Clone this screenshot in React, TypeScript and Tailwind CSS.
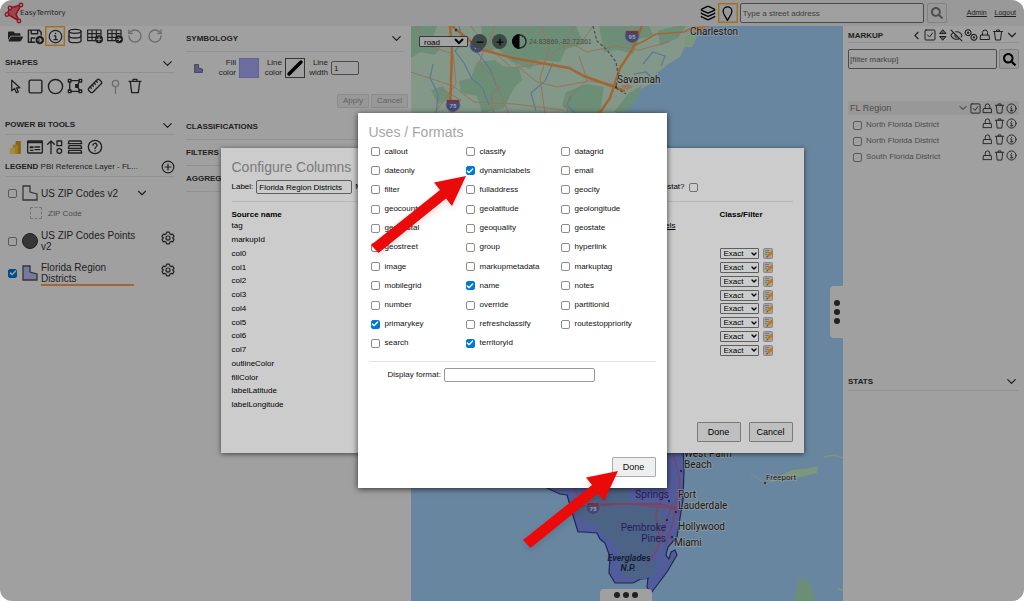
import { useState, type ReactNode } from "react";
import {
  Check,
  ChevronDown,
  ChevronLeft,
  Circle,
  Database,
  EyeOff,
  Layers,
  Minus,
  Plus,
  RotateCcw,
  RotateCw,
  Ruler,
  Square,
} from "lucide-react";
import { FaFolderOpen, FaSearch } from "react-icons/fa";

const FORMATS = [
  "callout", "classify", "datagrid",
  "dateonly", "dynamiclabels", "email",
  "filter", "fulladdress", "geocity",
  "geocounty", "geolatitude", "geolongitude",
  "geopostal", "geoquality", "geostate",
  "geostreet", "group", "hyperlink",
  "image", "markupmetadata", "markuptag",
  "mobilegrid", "name", "notes",
  "number", "override", "partitionid",
  "primarykey", "refreshclassify", "routestoppriority",
  "search", "territoryid",
];

const COLUMNS = [
  "tag", "markupId", "col0", "col1", "col2", "col3", "col4", "col5", "col6", "col7",
  "outlineColor", "fillColor", "labelLatitude", "labelLongitude",
];

const MARKUPS = ["North Florida District", "North Florida District", "South Florida District"];

function Glyph({ size = 16, children }: { size?: number; children: ReactNode }) {
  return (
    <svg
      width={size}
      height={size}
      viewBox="0 0 24 24"
      fill="none"
      stroke="currentColor"
      strokeWidth="2"
      strokeLinecap="round"
      strokeLinejoin="round"
      aria-hidden="true"
      className="shrink-0"
    >
      {children}
    </svg>
  );
}

const InfoIcon = ({ size = 16 }: { size?: number }) => (
  <Glyph size={size}>
    <circle cx="12" cy="12" r="10" />
    <path d="M10 11h2.400v6M9.500 17h5.500" />
    <circle cx="12" cy="7.200" r="1.300" fill="currentColor" stroke="none" />
  </Glyph>
);

const TrashIcon = ({ size = 16 }: { size?: number }) => (
  <Glyph size={size}>
    <path d="M3 5h18M9 5V2h6v3M5 6l2 16h10l2-16" />
  </Glyph>
);

const LockIcon = ({ size = 16 }: { size?: number }) => (
  <Glyph size={size}>
    <path d="M4 12h16l1 9H3zM7 12V7a5 5 0 0 1 10 0v5" />
  </Glyph>
);

const CheckSquareIcon = ({ size = 16 }: { size?: number }) => (
  <Glyph size={size}>
    <rect x="2" y="2" width="20" height="20" rx="2" />
    <path d="m7 12 4 4 6-8" />
  </Glyph>
);

const GearIcon = ({ size = 16 }: { size?: number }) => (
  <Glyph size={size}>
    <path d="M9.600 2h4.800l.7 3 2 1.200 3-.9 2.300 4.100L20.200 11.500v1l2.200 2.100-2.300 4.100-3-.9-2 1.200-.7 3H9.600l-.7-3-2-1.200-3 .9-2.300-4.100 2.200-2.100v-1L1.600 9.400l2.300-4.100 3 .9 2-1.200z" />
    <circle cx="12" cy="12" r="3.500" />
  </Glyph>
);

const SaveAsIcon = () => (
  <Glyph size={17}>
    <path d="M11 20H2V3h15l3 3v4M6 3v5h9V3M6 20v-6h5" />
    <circle cx="18" cy="17" r="6" fill="currentColor" stroke="none" />
    <path d="M15 17h5M18 14.500l2.500 2.500-2.500 2.500" stroke="white" strokeWidth="1.500" />
  </Glyph>
);

const TableBadgeIcon = ({ arrow = false }: { arrow?: boolean }) => (
  <Glyph size={16}>
    <path d="M1 3h20v8M1 3v16h11M1 8.500h20M1 14h13M7.500 3v16M14 3v11" strokeWidth="1.800" />
    <circle cx="18" cy="17" r="6" fill="currentColor" stroke="none" />
    <path
      d={arrow ? "M15 17h5.500M18 14.500l2.500 2.500-2.500 2.500" : "M15 17h6M18 14v6"}
      stroke="white"
      strokeWidth="1.500"
    />
  </Glyph>
);

const CursorIcon = () => (
  <Glyph size={15}>
    <path d="M6 2v17l4.500-4 3 7 3-1.300-3-6.700H19z" />
  </Glyph>
);

const EditVerticesIcon = () => (
  <Glyph size={16}>
    <rect x="2" y="2" width="4" height="4" />
    <rect x="18" y="2" width="4" height="4" />
    <rect x="2" y="18" width="4" height="4" />
    <rect x="18" y="18" width="4" height="4" />
    <rect x="13" y="10" width="4" height="4" fill="currentColor" />
    <path d="M6 4h12M4 6v12M6 20h12M18.500 6 16 10M16 14l3 4" />
  </Glyph>
);

const PushpinIcon = () => (
  <Glyph size={15}>
    <circle cx="12" cy="7" r="5" />
    <path d="M12 12v11" />
  </Glyph>
);

const PowerBiIcon = () => (
  <svg width="14" height="15" viewBox="0 0 24 24" aria-hidden="true">
    <rect x="13" y="1" width="9" height="22" rx="1" fill="#d99a1f" />
    <rect x="8" y="7" width="9" height="16" rx="1" fill="#f2bf3a" />
    <rect x="3" y="13" width="9" height="10" rx="1" fill="#ffdc70" />
  </svg>
);

const CardIcon = () => (
  <Glyph size={16}>
    <rect x="1" y="3" width="22" height="18" rx="1" />
    <path d="M2 5h20" strokeWidth="3" />
    <path d="M5 12h4v1H5zM5 17h4M12 12h7M12 16h7" />
  </Glyph>
);

const SortShapesIcon = () => (
  <Glyph size={16}>
    <path d="M6 22V3M1 8l5-5 5 5" />
    <rect x="15" y="3" width="7" height="7" />
    <circle cx="18.500" cy="18" r="3.500" />
  </Glyph>
);

const RowsIcon = () => (
  <Glyph size={16}>
    <path d="M3 3h18l1 4H2zM3 10h18l1 4H2zM3 17h18l1 4H2z" />
  </Glyph>
);

const HelpIcon = () => (
  <Glyph size={16}>
    <circle cx="12" cy="12" r="10" />
    <path d="M9 9.500a3 3 0 1 1 4.500 2.500c-1 .6-1.500 1-1.500 2.200M12 17.500v.2" />
  </Glyph>
);

function RegionShape({ size, fill }: { size: number; fill: string }) {
  return (
    <svg width={size} height={size} viewBox="0 0 16 16" aria-hidden="true" className="shrink-0">
      <path d="M1 1h7v6l7 2v6H1z" fill={fill} stroke="#555" strokeWidth="1.300" />
    </svg>
  );
}

function Logo() {
  return (
    <a href="#home" className="flex items-center">
      <svg width="20" height="22" viewBox="0 0 20 22" aria-hidden="true">
        <path d="M17 3 6 6 3 12l12 7-3-7 3-5z" fill="#f07078" stroke="#e01f2b" strokeWidth="1.500" />
        <g fill="#f4c5c5" stroke="#e01f2b" strokeWidth="1.300">
          <circle cx="17" cy="3" r="1.800" />
          <circle cx="6" cy="6" r="1.800" />
          <circle cx="3" cy="12.500" r="1.800" />
          <circle cx="15" cy="19" r="1.800" />
        </g>
      </svg>
      <span className="-ml-1 font-['DejaVu_Sans',sans-serif] text-[7px] text-[#333]">EasyTerritory</span>
    </a>
  );
}

function Checkbox({ id, label, checked = false }: { id: string; label?: string; checked?: boolean }) {
  const [on, setOn] = useState(checked);
  return (
    <span className="grid size-[9px] shrink-0 place-items-center">
      <input
        id={id}
        type="checkbox"
        aria-label={label}
        checked={on}
        onChange={(e) => setOn(e.target.checked)}
        className="col-start-1 row-start-1 size-[9px] appearance-none rounded-[2px] border border-[#8c8c8c] bg-white/40 checked:border-[#0078d7] checked:bg-[#0078d7]"
      />
      {on && <Check size={8} strokeWidth={4} className="pointer-events-none col-start-1 row-start-1 text-white" />}
    </span>
  );
}

function Tool({ label, active = false, muted = false, children }: {
  label: string;
  active?: boolean;
  muted?: boolean;
  children: ReactNode;
}) {
  return (
    <button
      aria-label={label}
      className={`flex size-5 shrink-0 items-center justify-center ${active ? "border border-[#ffb02a] outline outline-[#ffb02a]/40 -outline-offset-2" : ""} ${muted ? "text-[#aaa]" : "text-[#333]"}`}
    >
      {children}
    </button>
  );
}

function Heading({ title, collapsible = true, className = "" }: {
  title: string;
  collapsible?: boolean;
  className?: string;
}) {
  return (
    <div className={`flex items-center justify-between border-b border-[#e4e4e4] ${className}`}>
      <h2 className="font-bold">{title}</h2>
      {collapsible && <ChevronDown size={15} strokeWidth={2} className="text-[#333]" />}
    </div>
  );
}

function TopBar() {
  return (
    <header className="flex h-[26px] items-center justify-between bg-[#f0f0f0] pr-2 pl-1">
      <Logo />
      <div className="flex items-center">
        <Tool label="Layers"><Layers size={16} className="text-black" /></Tool>
        <Tool label="Place pushpin" active>
          <Glyph size={15}>
            <path stroke="black" d="M12 23C9 17 5 13.500 5 8.500a7 7 0 0 1 14 0C19 13.500 15 17 12 23z" />
          </Glyph>
        </Tool>
        <input
          aria-label="Street address"
          placeholder="Type a street address"
          className="ml-0.5 h-5 w-[184px] rounded-[2px] border border-[#767676] bg-white/60 px-0.5 placeholder:text-[#666]"
        />
        <button aria-label="Search" className="ml-[3px] flex size-5 items-center justify-center rounded-[2px] border border-[#ccc] bg-[#efefef] text-[#777]">
          <FaSearch size={12} />
        </button>
        <nav className="ml-5 flex gap-2 text-[7px] underline">
          <a href="#admin">Admin</a>
          <a href="#logout">Logout</a>
        </nav>
      </div>
    </header>
  );
}

function Sidebar() {
  return (
    <aside className="w-[180px] shrink-0 bg-[#fbfbfb] px-[5px]">
      <div className="flex">
        <Tool label="Open"><FaFolderOpen size={15} /></Tool>
        <Tool label="Save as"><SaveAsIcon /></Tool>
        <Tool label="Info" active><InfoIcon size={15} /></Tool>
        <Tool label="Data"><Database size={16} /></Tool>
        <Tool label="Add table"><TableBadgeIcon /></Tool>
        <Tool label="Export table"><TableBadgeIcon arrow /></Tool>
        <Tool label="Undo" muted><RotateCcw size={16} /></Tool>
        <Tool label="Redo" muted><RotateCw size={16} /></Tool>
      </div>

      <Heading title="SHAPES" className="mt-2 h-[19px]" />
      <div className="mt-[3px] flex">
        <Tool label="Select"><CursorIcon /></Tool>
        <Tool label="Rectangle"><Square size={17} /></Tool>
        <Tool label="Circle"><Circle size={17} /></Tool>
        <Tool label="Edit"><EditVerticesIcon /></Tool>
        <Tool label="Measure"><Ruler size={16} className="-scale-x-100" /></Tool>
        <Tool label="Pushpin" muted><PushpinIcon /></Tool>
        <Tool label="Delete"><TrashIcon size={16} /></Tool>
      </div>

      <Heading title="POWER BI TOOLS" className="mt-5 h-[19px]" />
      <div className="mt-[2px] flex">
        <Tool label="Power BI"><PowerBiIcon /></Tool>
        <Tool label="Card"><CardIcon /></Tool>
        <Tool label="Sort"><SortShapesIcon /></Tool>
        <Tool label="Rows"><RowsIcon /></Tool>
        <Tool label="Help"><HelpIcon /></Tool>
      </div>

      <div className="mt-px flex h-[19px] items-center justify-between border-b border-[#e4e4e4]">
        <p className="whitespace-nowrap">
          <b>LEGEND</b> PBI Reference Layer - FL...
        </p>
        <button aria-label="Add layer">
          <Glyph size={14}>
            <circle cx="12" cy="12" r="10" />
            <path d="M12 7v10M7 12h10" />
          </Glyph>
        </button>
      </div>

      <ul className="mt-2 text-[10px] leading-[11px]">
        <li className="flex h-4 items-center pl-[3px]">
          <Checkbox id="zip" />
          <span className="ml-[5px]"><RegionShape size={16} fill="none" /></span>
          <label htmlFor="zip" className="ml-[3px] w-[94px]">US ZIP Codes v2</label>
          <ChevronDown size={14} className="text-[#333]" />
        </li>
        <li className="mt-1 flex h-4 items-center gap-1.5 pl-[25px] text-[8px] text-[#777]">
          <span className="size-3 border border-dashed border-[#bbb]" />
          ZIP Code
        </li>
        <li className="mt-2 flex h-6 items-center pl-[3px]">
          <Checkbox id="points" />
          <span className="ml-[5px] size-4 rounded-full border border-[#333] bg-[#555]" />
          <label htmlFor="points" className="ml-[3px] w-[96px]">US ZIP Codes Points v2</label>
          <span className="mb-1.5 ml-auto"><GearIcon size={14} /></span>
        </li>
        <li className="mt-2 flex h-6 items-center pl-[3px]">
          <Checkbox id="florida" checked />
          <span className="ml-[5px]"><RegionShape size={16} fill="#bcbcff" /></span>
          <label htmlFor="florida" className="ml-[3px] w-[93px] border-b-2 border-[#ffa04d] pt-0.5">
            Florida Region<br />Districts
          </label>
          <span className="mb-1.5 ml-auto"><GearIcon size={14} /></span>
        </li>
      </ul>
    </aside>
  );
}

function StylePanel() {
  return (
    <section className="w-[231px] shrink-0 bg-[#fbfbfb] pr-[7px] pl-1.5">
      <Heading title="SYMBOLOGY" className="h-[26px]" />
      <div className="mt-1.5 flex items-center pl-2 leading-[10px]">
        <RegionShape size={9} fill="#8f8fe0" />
        <label htmlFor="fill" className="ml-3 w-[21px] text-right">Fill color</label>
        <button id="fill" aria-label="Fill color" className="ml-[3px] size-5 border border-[#9c9ce6] bg-[#a9a9fb]" />
        <label htmlFor="line" className="ml-0.5 w-[21px] text-right">Line color</label>
        <button id="line" aria-label="Line color" className="ml-[3px] size-5 border border-[#555]">
          <svg viewBox="0 0 18 18" aria-hidden="true">
            <path d="M3 15 15 3" stroke="black" strokeWidth="3.500" strokeLinecap="round" />
          </svg>
        </button>
        <label htmlFor="width" className="ml-0.5 w-[21px] text-right">Line width</label>
        <input id="width" defaultValue="1" className="ml-[3px] h-3.5 w-7 rounded-[2px] border border-[#767676] px-0.5" />
      </div>
      <div className="-mr-1 mt-4 flex justify-end gap-0.5 text-[#999]">
        <button className="h-3.5 w-8 rounded-[1px] border border-[#ddd] bg-[#efefef]">Apply</button>
        <button className="h-3.5 w-[37px] rounded-[1px] border border-[#ddd] bg-[#efefef]">Cancel</button>
      </div>
      <Heading title="CLASSIFICATIONS" collapsible={false} className="mt-1.5 h-[26px]" />
      <Heading title="FILTERS" collapsible={false} className="h-[26px]" />
      <Heading title="AGGREGATIONS" collapsible={false} className="h-[26px]" />
    </section>
  );
}

function Shield({ x, y, n }: { x: number; y: number; n: string }) {
  return (
    <g>
      <path
        d={`M${x - 6} ${y - 5}h12l1 5q0 5-7 7-7-2-7-7z`}
        fill="#6773bd"
        stroke="#aab"
        strokeWidth="0.600"
      />
      <path d={`M${x - 6} ${y - 5}h12v2h-12z`} fill="#d84452" />
      <text x={x} y={y + 3} textAnchor="middle" fontSize="6" fontWeight="bold" fill="white">{n}</text>
    </g>
  );
}

const FLORIDA =
  "M110 420V452L136 462 149 468 156 469 161 486 167 506 172 506 186 507 189 513 194 517 199 531 198 547 204 557 222 557 230 553 237 552 236 561 240 567 247 558 256 546 266 529 264 524 260 526 258 533 255 529 257 521 266 511 269 492 272 474 273 444 272 420z";

function MapCanvas() {
  return (
    <svg
      viewBox="0 0 432 575"
      preserveAspectRatio="xMidYMid slice"
      className="absolute inset-0 size-full font-[Roboto,sans-serif]"
      role="img"
      aria-label="Map"
    >
      <rect width="432" height="575" fill="#a5d2fa" />
      <path d="M0 0H284L281 12 273 22 269 31 256 39 246 47 240 58 223 66 221 76 210 87 200 110H0z" fill="#cdeed7" />
      <g fill="#acdfb9">
        <path d="M0 0h26l-4 12 8 9-6 8-14-3-10 6z" />
        <path d="M70 0h95l8 18-18 5-6 13-22-2-8 9-18-7-14-13-14 2z" />
        <path d="M188 0h50l5 10-15 3-6 15-15-4-14 2z" />
        <path d="M66 36l18-2 8 6 16 2 3 12-8 8-10 20-22 5-5-17-16-3-2-12 12-3z" />
        <path d="M155 66l20-8 18 3-4 27h-28l-10-8z" />
        <path d="M217 68l14-9-6 16-14 14-8-3z" />
        <path d="M20 64l12-4 9 12-14 6z" />
        <path d="M247 5l18-5h10l-8 12-18 8z" />
      </g>
      <g fill="none" stroke="#8fbcf0" strokeWidth="1.200">
        <path d="M48 0l4 16-8 9 9 12 8 16 10 8 7 18M66 26l13 17 6 16M125 85l-5-18 14-12 8-18M22 38l-3 14 8 16-2 20" />
        <path d="M232 38l10-12 12 4-4 10M223 48l12-2 8 8M164 87l-8-8 5-10" />
      </g>
      <g fill="none" stroke="#e9b795" strokeWidth="1">
        <path d="M0 46l42 14 21 16 40 2 50 6M4 0l15 20 23 8 3 30-22 30M60 0l14 20-6 18 14 12 16 38" />
        <path d="M84 0l-8 20 25 22 30-4 17-16 22-5 12-17M104 38l22 18 20 5 32-6 28 4M130 0l8 22-9 30 5 35" />
        <path d="M164 0l-10 14 22 12 28-6 24 4 30-8M168 30l8 24-18 18-2 16M28 62l22 12-10 14M90 60l-10 8 3 20" />
      </g>
      <g fill="none" stroke="#ff9f51" strokeWidth="2.500">
        <path d="M39 0l2 24-2 62" />
        <path d="M41 0l28 23 33 9 34 6 22 4 15 8 22 8 19 7" />
        <path d="M231 0l-10 24-12 18-10 30-11 16" />
        <path d="M221 21l12-6 12-7 28-2 10-5" strokeWidth="1.500" />
      </g>
      <path d="M182 0l4 15 10 9 9 12 2 12-2 14 10 6" fill="none" stroke="#777" strokeDasharray="3 2" strokeWidth="1.200" />
      <circle cx="45" cy="4" r="1.500" fill="#333" stroke="#ddd" strokeWidth="0.500" />
      <circle cx="205" cy="61" r="1" fill="#333" />
      <path d="M209 60l8-2 5 3-6 3z" fill="#f2bd98" />
      <path d="M282 0h14l-6 6-7 2z" fill="#ffae72" />
      <path d="M275 10l7-4 4 5-5 10h-8z" fill="#c6ebc4" />
      <Shield x={66} y={20} n="16" />
      <Shield x={221} y={10} n="95" />
      <Shield x={42} y={79} n="75" />

      <path d={FLORIDA} fill="#8090f3" stroke="#333d83" strokeWidth="1.200" />
      <path
        d="M165 475l18-13h33l4 16 30 5 5 15-4 18-9 16 4 12-12 10-22-4-5-28-20-20-22-12z"
        fill="#779bd3"
      />
      <g fill="none" stroke="#b873ab" strokeWidth="1.600">
        <path d="M163 462l8 18 47-2 40 4 12 2M262 427l7 28-7 42-8 22M254 462l-9 26 4 26M268 450v40M262 476l-16 48-10 14" />
      </g>
      <path d="M171 480l33-2h45l15 4" stroke="#bf6b92" strokeWidth="2" fill="none" />
      <Shield x={182} y={482} n="75" />
      <g fill="#413985">
        <circle cx="270" cy="445" r="1.200" />
        <circle cx="258" cy="475" r="1.200" />
        <circle cx="265" cy="486" r="1.200" />
        <circle cx="256" cy="494" r="1.200" />
        <circle cx="261" cy="511" r="1.200" />
      </g>

      <path d="M355 458l14-8 12-6 14-1 12-3-1 7-16 4-14 1-15 4z" fill="#c6ebc4" />
      <path d="M340 448l12 8 4 3" stroke="#ddd" fill="none" />
      <circle cx="354" cy="457" r="1" fill="#333" />
      <path d="M386 552l12 2 3 10 4 11h-22l4-14z" fill="#acdfb9" />
      <path d="M413 431l10-2 9 3M427 562l5 3" stroke="#c6ebc4" strokeWidth="1.500" fill="none" />

      <g fontSize="10" fill="#2b2b2b" stroke="white" strokeWidth="2" strokeOpacity="0.500" paintOrder="stroke">
        <text x="206" y="57">Savannah</text>
        <text x="279" y="9">Charleston</text>
        <text x="273" y="431">West Palm</text>
        <text x="273" y="442">Beach</text>
        <text x="267" y="472">Fort</text>
        <text x="267" y="483">Lauderdale</text>
        <text x="267" y="504">Hollywood</text>
        <text x="263" y="520">Miami</text>
        <text x="355" y="454" fontSize="8">Freeport</text>
      </g>
      <g fontSize="10" fill="#3c2f91">
        <text x="258" y="472" textAnchor="end">Springs</text>
        <text x="255" y="505" textAnchor="end">Pembroke</text>
        <text x="255" y="516" textAnchor="end">Pines</text>
      </g>
      <g fontSize="9" fill="#26345e" fontStyle="italic" fontWeight="bold" textAnchor="middle">
        <text x="218" y="535">Everglades</text>
        <text x="217" y="545">N.P.</text>
      </g>
    </svg>
  );
}

function MapView() {
  return (
    <main className="relative min-w-0 flex-1 overflow-hidden">
      <MapCanvas />
      <div className="relative flex items-center pt-2 pl-2">
        <select aria-label="Map style" className="h-[11px] w-[49px] rounded-[1px] border border-[#555] bg-white text-black">
          <option>road</option>
        </select>
        <button aria-label="Zoom out" className="ml-1 flex size-[15px] items-center justify-center rounded-full bg-[#60736b] text-black">
          <Minus size={10} strokeWidth={3} />
        </button>
        <button aria-label="Zoom in" className="ml-[5px] flex size-[15px] items-center justify-center rounded-full bg-[#60736b] text-black">
          <Plus size={10} strokeWidth={3} />
        </button>
        <button aria-label="Contrast" className="ml-[5px]">
          <svg width="15" height="15" viewBox="0 0 15 15" aria-hidden="true">
            <circle cx="7.500" cy="7.500" r="6.500" fill="none" stroke="#444" strokeWidth="1.500" />
            <path d="M7.500 0a7.500 7.500 0 0 0 0 15z" />
          </svg>
        </button>
        <span className="ml-0.5 text-[7px] text-[#777]">24.83869,-82.72361</span>
      </div>
      <button aria-label="Toggle side panel" className="absolute top-[260px] right-0 flex h-[52px] w-[13px] flex-col items-center justify-center gap-[3px] rounded-l bg-[#fbfbfb]">
        <Dots />
      </button>
      <button aria-label="Toggle grid" className="absolute bottom-0 left-1/2 ml-[-27px] flex h-3 w-[52px] items-center justify-center gap-[3px] rounded-t bg-[#fbfbfb]">
        <Dots />
      </button>
    </main>
  );
}

function Dots() {
  return (
    <>
      <i className="size-1.5 rounded-full bg-[#333]" />
      <i className="size-1.5 rounded-full bg-[#333]" />
      <i className="size-1.5 rounded-full bg-[#333]" />
    </>
  );
}

function MarkupPanel() {
  return (
    <aside className="w-[181px] shrink-0 bg-[#fbfbfb] px-[5px]">
      <div className="flex h-[17px] items-end justify-between border-b border-[#e4e4e4]">
        <h2 className="pb-px font-bold">MARKUP</h2>
        <div className="flex items-center gap-px">
          <ChevronLeft size={13} />
          <CheckSquareIcon size={12} />
          <Glyph size={12}>
            <path d="M12 2l6 7H6zM12 22l6-7H6z" fill="currentColor" fillOpacity="0.500" />
          </Glyph>
          <EyeOff size={13} />
          <Glyph size={14}>
            <circle cx="7" cy="8" r="5" strokeDasharray="3 1.500" />
            <circle cx="7" cy="8" r="1" />
            <circle cx="17" cy="16" r="5" strokeDasharray="3 1.500" />
            <circle cx="17" cy="16" r="1" />
          </Glyph>
          <LockIcon size={12} />
          <TrashIcon size={12} />
          <ChevronDown size={14} />
        </div>
      </div>
      <div className="mt-1.5 flex gap-0.5">
        <input
          aria-label="Filter markup"
          placeholder="[filter markup]"
          className="h-5 min-w-0 flex-1 rounded-[2px] border border-[#767676] px-px placeholder:text-[#666]"
        />
        <button aria-label="Search markup" className="flex size-5 items-center justify-center rounded-[2px] border border-[#ccc] bg-[#efefef] text-black">
          <FaSearch size={13} />
        </button>
      </div>

      <div className="mt-8 flex h-3.5 items-center justify-between bg-[#efefef] pr-0.5 pl-0.5 text-[#777]">
        <span className="text-[9px]">FL Region</span>
        <span className="flex items-center gap-px text-[#333]">
          <ChevronDown size={12} />
          <CheckSquareIcon size={11} />
          <LockIcon size={11} />
          <TrashIcon size={11} />
          <InfoIcon size={11} />
        </span>
      </div>
      <ul className="mt-0.5">
        {MARKUPS.map((name, i) => (
          <li key={i} className="flex h-4 items-center pr-0.5 pl-[5px] text-[#777]">
            <Checkbox id={`markup-${i}`} />
            <label htmlFor={`markup-${i}`} className="ml-1 flex-1">{name}</label>
            <span className="mb-1 flex gap-px text-[#333]">
              <LockIcon size={11} />
              <TrashIcon size={11} />
              <InfoIcon size={11} />
            </span>
          </li>
        ))}
      </ul>
      <Heading title="STATS" className="mt-52 h-[18px]" />
    </aside>
  );
}

function ConfigureDialog() {
  return (
    <section role="dialog" aria-label="Configure Columns" className="flex min-h-[305px] w-[583px] flex-col bg-white px-[11px] pt-2.5 pb-[11px] text-black shadow-[0_1px_5px_rgba(0,0,0,0.6)]">
      <h1 className="text-[14px] leading-[18px] text-[#999]">Configure Columns</h1>
      <div className="mt-px flex h-5 items-center">
        <label htmlFor="label">Label:</label>
        <input id="label" defaultValue="Florida Region Districts" className="mr-[3px] ml-[3px] h-3.5 w-24 rounded-[2px] border border-[#767676] px-0.5" />
        <span>Max</span>
        <label htmlFor="stat" className="ml-auto">Thermostat?</label>
        <span className="mr-[95px] ml-1 flex"><Checkbox id="stat" /></span>
      </div>
      <table className="mt-1 h-[211px] w-full border-t border-[#e4e4e4] text-left">
        <thead>
          <tr className="h-[18px] align-bottom">
            <th>Source name</th>
            <th>Uses</th>
            <th className="w-[73px]">Class/Filter</th>
          </tr>
        </thead>
        <tbody>
          {COLUMNS.map((name) => (
            <tr key={name} className="h-[13px]">
              <td className="p-0">{name}</td>
              <td className="p-0 pr-11 text-right">
                {name === "tag" && <a href="#labels" className="underline">Labels</a>}
              </td>
              <td className="p-0">
                {name.startsWith("col") && (
                  <span className="flex items-center gap-1">
                    <span className="grid items-center">
                      <select aria-label={`${name} class`} className="col-start-1 row-start-1 h-[11px] w-[39px] appearance-none rounded-[1px] border border-[#767676] pl-[3px] leading-[9px]">
                        <option>Exact</option>
                      </select>
                      <ChevronDown size={8} strokeWidth={4} className="pointer-events-none col-start-1 row-start-1 mr-px justify-self-end" />
                    </span>
                    <button aria-label={`Edit ${name}`}>
                      <svg width="10" height="11" viewBox="0 0 10 11" aria-hidden="true" className="block">
                        <rect x="0.500" y="0.500" width="9" height="10" rx="1" fill="#ccc" stroke="#aaa" />
                        <path d="M2 2h4v1H2zM2 4h4v1H2zM2 6h2v1H2z" fill="#999" />
                        <path d="M4 9l1-3 4-3 1 2-4 3z" fill="#f5960f" stroke="#f5960f" strokeWidth="0.600" />
                        <path d="M3.500 9.500 4 8l1 1z" fill="#333" />
                      </svg>
                    </button>
                  </span>
                )}
              </td>
            </tr>
          ))}
        </tbody>
      </table>
      <div className="mt-auto flex justify-end gap-2 text-[9px]">
        <button className="h-5 w-11 rounded-[1px] border border-[#999] bg-[#efefef]">Done</button>
        <button className="h-5 w-11 rounded-[1px] border border-[#999] bg-[#efefef]">Cancel</button>
      </div>
    </section>
  );
}

function Arrow({ className }: { className: string }) {
  return (
    <svg width="98" height="80" viewBox="0 0 98 80" aria-hidden="true" className={`pointer-events-none absolute drop-shadow-md ${className}`}>
      <path d="M96 0 64 6.500 70 14 1 69 8.500 77 76 22.500 82 30z" fill="#ea0a0a" />
    </svg>
  );
}

function FormatsDialog() {
  return (
    <section role="dialog" aria-label="Uses / Formats" className="relative flex min-h-[375px] w-[309px] flex-col bg-white px-[11px] pt-2.5 pb-[11px] text-[#111] shadow-[0_1px_6px_rgba(0,0,0,0.7)]">
      <h1 className="mb-px text-[14px] leading-[18px] text-[#a5a5a5]">Uses / Formats</h1>
      <div className="grid h-[211px] auto-rows-fr grid-cols-3 pl-0.5">
        {FORMATS.map((name) => (
          <div key={name} className="flex items-center gap-[5px]">
            <Checkbox id={name} checked={["dynamiclabels", "name", "primarykey", "territoryid"].includes(name)} />
            <label htmlFor={name}>{name}</label>
          </div>
        ))}
      </div>
      <div className="mt-2 flex items-center gap-[3px] border-t border-[#e4e4e4] pt-1.5 pl-[19px]">
        <label htmlFor="format">Display format:</label>
        <input id="format" className="h-3.5 w-[151px] rounded-[2px] border border-[#999] px-0.5" />
      </div>
      <div className="mt-auto flex justify-end text-[9px]">
        <button className="h-5 w-11 rounded-[1px] border border-[#aaa] bg-[#efefef]">Done</button>
      </div>
      <Arrow className="top-[63px] left-3" />
      <Arrow className="top-[358px] left-[164px]" />
    </section>
  );
}

export default function App() {
  return (
    <div className="relative flex min-h-screen flex-col overflow-hidden rounded-xl font-['Liberation_Sans',Arial,sans-serif] text-[8px] leading-[10px] text-[#333]">
      <TopBar />
      <div className="flex flex-1">
        <Sidebar />
        <StylePanel />
        <MapView />
        <MarkupPanel />
      </div>
      <div className="absolute inset-0 flex items-center justify-center bg-black/20">
        <ConfigureDialog />
      </div>
      <div className="absolute inset-0 flex items-center justify-center bg-black/20">
        <FormatsDialog />
      </div>
    </div>
  );
}
